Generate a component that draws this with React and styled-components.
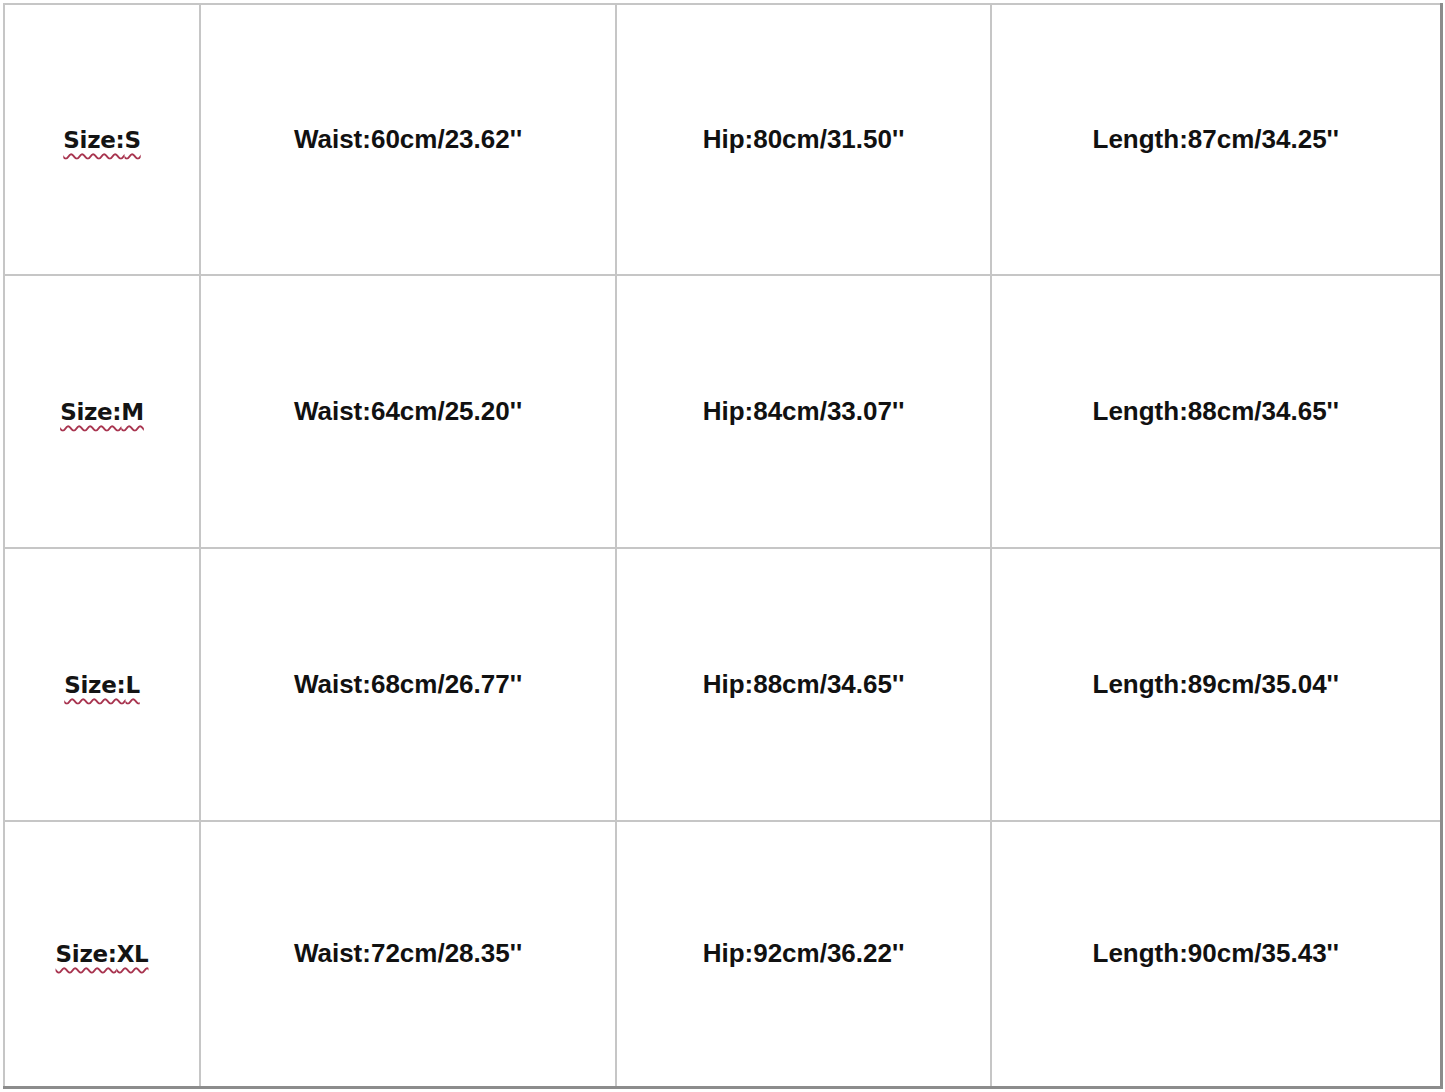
import styled, { createGlobalStyle } from 'styled-components';

const GlobalStyle = createGlobalStyle`
  html, body {
    margin: 0;
    padding: 0;
    background: #ffffff;
  }
`;

const rows = [
  { size: 'S', waist: '60cm/23.62', hip: '80cm/31.50', length: '87cm/34.25' },
  { size: 'M', waist: '64cm/25.20', hip: '84cm/33.07', length: '88cm/34.65' },
  { size: 'L', waist: '68cm/26.77', hip: '88cm/34.65', length: '89cm/35.04' },
  { size: 'XL', waist: '72cm/28.35', hip: '92cm/36.22', length: '90cm/35.43' },
];

const heights = [271, 273, 273, 266];

const App = () => {
  return (
    <Page>
      <GlobalStyle />
      <Chart>
        <colgroup>
          <col style={{ width: 196 }} />
          <col style={{ width: 416 }} />
          <col style={{ width: 375 }} />
          <col style={{ width: 450 }} />
        </colgroup>
        <tbody>
          {rows.map((r, i) => (
            <Row key={r.size} style={{ height: heights[i] }}>
              <Cell>
                <SizeLabel>Size:{r.size}</SizeLabel>
              </Cell>
              <Cell>
                <Measure>Waist:{r.waist}''</Measure>
              </Cell>
              <Cell>
                <Measure>Hip:{r.hip}''</Measure>
              </Cell>
              <Cell>
                <Measure>Length:{r.length}''</Measure>
              </Cell>
            </Row>
          ))}
        </tbody>
      </Chart>
    </Page>
  );
};

export default App;

const Page = styled.div`
  padding: 3px 0 0 3px;
  width: 1445px;
  height: 1092px;
  box-sizing: border-box;
  background: #ffffff;
`;

const Chart = styled.table`
  border-collapse: collapse;
  table-layout: fixed;
  width: 1437px;
  border-top: 2px solid #b8b8b8;
  border-left: 2px solid #b8b8b8;
  border-right: 3px solid #8c8c8c;
  border-bottom: 3px solid #8c8c8c;
`;

const Row = styled.tr``;

const Cell = styled.td`
  border: 2px solid #c6c6c6;
  padding: 0;
  text-align: center;
  vertical-align: middle;
`;

const Measure = styled.span`
  font-family: 'Liberation Sans', Arial, sans-serif;
  font-weight: 700;
  font-size: 26px;
  color: #111111;
`;

const SizeLabel = styled.span`
  font-family: 'DejaVu Sans', sans-serif;
  font-weight: 700;
  font-size: 23px;
  letter-spacing: -0.3px;
  color: #141414;
  text-decoration: underline wavy #a8344f;
  text-decoration-thickness: 1.5px;
  text-underline-offset: 5px;
`;
